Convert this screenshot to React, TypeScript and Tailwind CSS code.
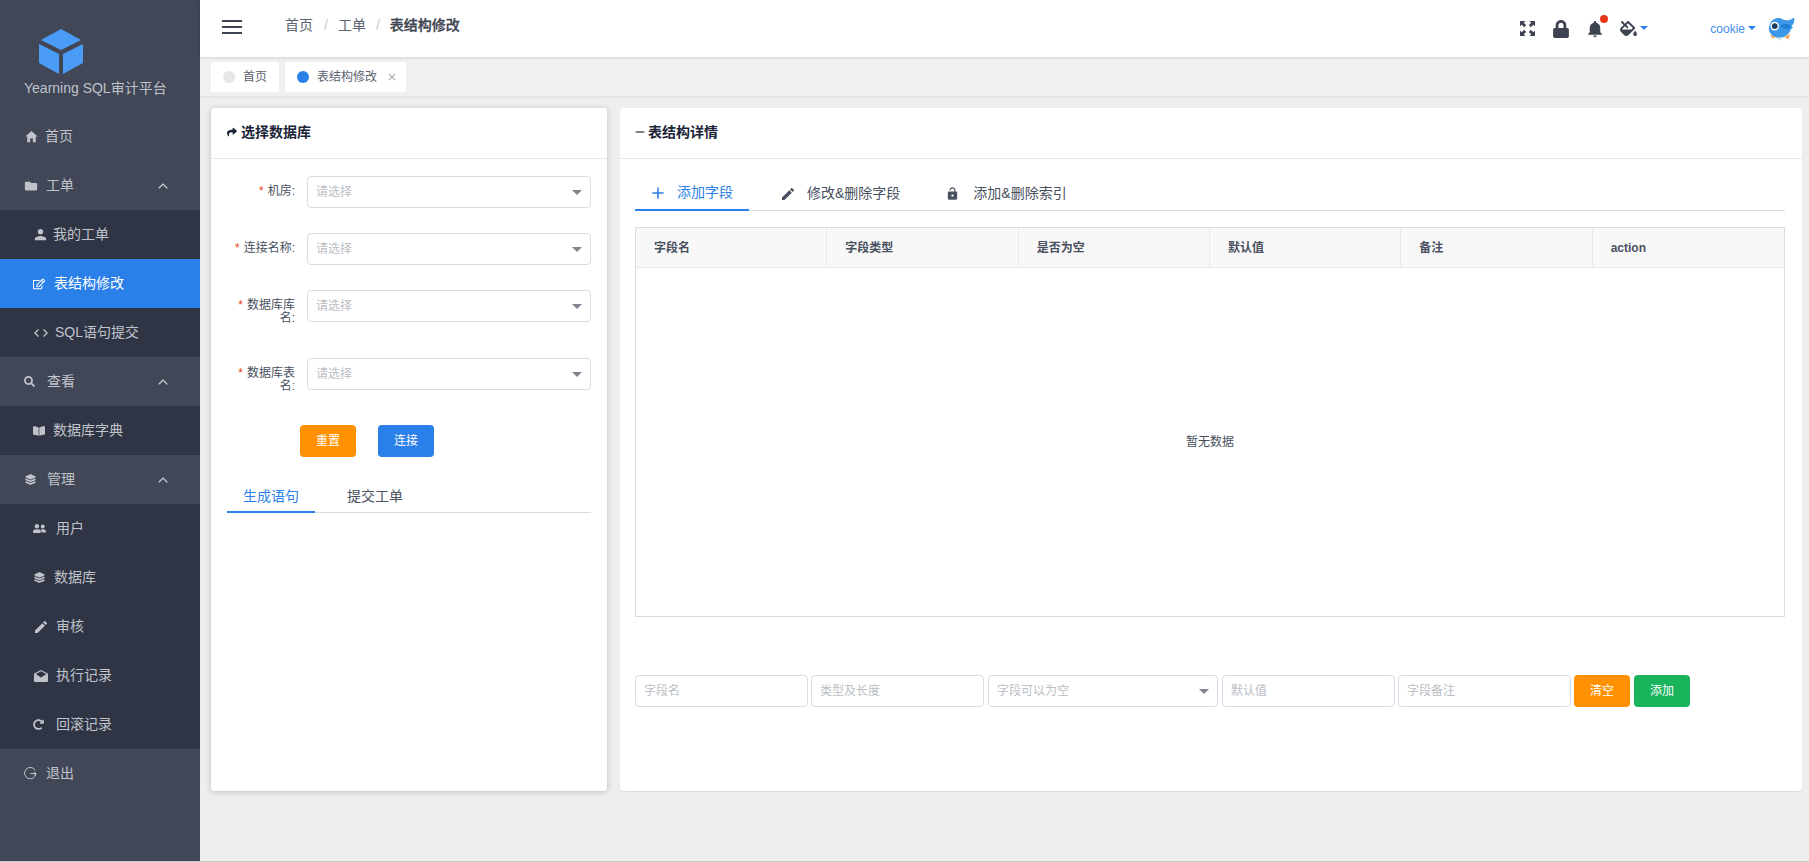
import {ReactNode} from "react";
import {
  IoMdAdd,
  IoMdClose,
  IoMdCode,
  IoMdCreate,
  IoMdFolder,
  IoMdHome,
  IoMdMailOpen,
  IoMdNotifications,
  IoMdPerson,
  IoMdRemove,
  IoMdUnlock,
  IoIosArrowUp,
} from "react-icons/io";
import {FaBookOpen, FaFillDrip, FaLock, FaRedoAlt, FaRegEdit, FaSearch, FaShare, FaUserFriends} from "react-icons/fa";
import {IoLayers} from "react-icons/io5";

const font = "font-['Liberation_Sans','Noto_Sans_CJK_SC',sans-serif]";

function Logo() {
  return (
    <svg width="44" height="46" viewBox="0 0 44 46" className="block">
      <path d="M22 0 42 11 22 21 2 11Z" fill="#4a9cf6" />
      <path d="M0 15 20 25V45L0 34Z" fill="#4a9cf6" />
      <path d="M44 15 24 25V45L44 34Z" fill="#4a9cf6" />
    </svg>
  );
}

function Bird() {
  return (
    <svg width="29" height="28" viewBox="0 0 30 28" className="block">
      <path d="M3 9C5 3 12 1 16 4 20 6 24 5 28 2 29 7 27 10 25 11 27 12 27 13 25 14 23 20 17 24 10 23 4 22 0 15 3 9Z" fill="#3b97e8" />
      <path d="M9 23 13 26 17 23Z" fill="#d9e6ee" />
      <path d="M18 22 22 25 24 19Z" fill="#f2a65a" />
      <path d="M3 20 6 24 9 22Z" fill="#f2a65a" />
      <circle cx="8" cy="11" r="4.5" fill="#ffffff" />
      <circle cx="8" cy="11" r="3" fill="#1d3a5f" />
      <path d="M14 10C18 8 23 9 25 11 23 15 18 16 14 10Z" fill="#1f7fd4" />
    </svg>
  );
}

function LogoutIcon() {
  return (
    <svg width="13" height="13" viewBox="0 0 13 13" fill="none" stroke="currentColor" strokeWidth="1" className="block">
      <path d="M11.2 3.2A5.7 5.7 0 1 0 12 6.5" />
      <path d="M6.5 6.5H12M10 4.8 12 6.5 10 8.2" />
    </svg>
  );
}

function ExpandIcon() {
  return (
    <svg width="15" height="15" viewBox="0 0 15 15" fill="#3d4350" className="block">
      <path d="M0 0H5.5L3.8 1.7 6.2 4.1 4.1 6.2 1.7 3.8 0 5.5Z" />
      <path d="M15 0V5.5L13.3 3.8 10.9 6.2 8.8 4.1 11.2 1.7 9.5 0Z" />
      <path d="M0 15V9.5L1.7 11.2 4.1 8.8 6.2 10.9 3.8 13.3 5.5 15Z" />
      <path d="M15 15H9.5L11.2 13.3 8.8 10.9 10.9 8.8 13.3 11.2 15 9.5Z" />
    </svg>
  );
}

type NavItem = {
  label: string;
  icon: ReactNode;
  sub?: boolean;
  active?: boolean;
  arrow?: boolean;
  iconBox: string;
};

const navItems: NavItem[] = [
  {label: "首页", icon: <IoMdHome size={15} />, iconBox: "w-[21px]"},
  {label: "工单", icon: <IoMdFolder size={14} />, arrow: true, iconBox: "w-[22px]"},
  {label: "我的工单", icon: <IoMdPerson size={15} />, sub: true, iconBox: "w-[20px]"},
  {label: "表结构修改", icon: <FaRegEdit size={12} />, sub: true, active: true, iconBox: "w-[21px]"},
  {label: "SQL语句提交", icon: <IoMdCode size={16} />, sub: true, iconBox: "w-[22px]"},
  {label: "查看", icon: <FaSearch size={11} />, arrow: true, iconBox: "w-[23px]"},
  {label: "数据库字典", icon: <FaBookOpen size={12} />, sub: true, iconBox: "w-[20px]"},
  {label: "管理", icon: <IoLayers size={13} />, arrow: true, iconBox: "w-[23px]"},
  {label: "用户", icon: <FaUserFriends size={13} />, sub: true, iconBox: "w-[23px]"},
  {label: "数据库", icon: <IoLayers size={13} />, sub: true, iconBox: "w-[21px]"},
  {label: "审核", icon: <IoMdCreate size={16} />, sub: true, iconBox: "w-[23px]"},
  {label: "执行记录", icon: <IoMdMailOpen size={16} />, sub: true, iconBox: "w-[23px]"},
  {label: "回滚记录", icon: <FaRedoAlt size={11} />, sub: true, iconBox: "w-[23px]"},
  {label: "退出", icon: <LogoutIcon />, iconBox: "w-[22px]"},
];

function Sidebar() {
  return (
    <aside className="w-[200px] shrink-0 bg-[#414757] text-[14px] text-[#c0c3ca]">
      <div className="flex h-[112px] flex-col pl-[24px]">
        <div className="ml-[15px] mt-[29px]">
          <Logo />
        </div>
        <div className="mt-[3px] text-[14px] leading-[20px] whitespace-nowrap text-[#bfc2c9]">Yearning SQL审计平台</div>
      </div>
      {navItems.map((item) => (
        <div
          key={item.label}
          className={`flex h-[49px] items-center ${item.sub ? "pl-[33px]" : "pl-[24px]"} ${
            item.active ? "bg-[#2a7fe8] text-white" : item.sub ? "bg-[#2f3545]" : ""
          }`}
        >
          <span className={`flex shrink-0 items-center ${item.iconBox}`}>{item.icon}</span>
          <span className="flex-1">{item.label}</span>
          {item.arrow && <IoIosArrowUp size={14} className="mr-[30px]" />}
        </div>
      ))}
    </aside>
  );
}

function Header() {
  return (
    <header className="relative z-10 flex h-[57px] items-center bg-white pl-[22px] pr-[13px] shadow-[0_1px_3px_rgba(0,0,0,0.12)]">
      <div className="flex w-[20px] -translate-y-[2px] flex-col gap-[4px]">
        <div className="h-[2px] bg-[#3d4350]" />
        <div className="h-[2px] bg-[#3d4350]" />
        <div className="h-[2px] bg-[#3d4350]" />
      </div>
      <nav className="ml-[43px] flex -translate-y-[3px] items-center text-[14px] text-[#5b6270]">
        <span>首页</span>
        <span className="ml-[11px] mr-[10px] text-[#ccc]">/</span>
        <span>工单</span>
        <span className="mx-[10px] text-[#ccc]">/</span>
        <span className="font-medium text-[#3d4350] [-webkit-text-stroke:0.3px_#3d4350]">表结构修改</span>
      </nav>
      <div className="ml-auto flex items-center text-[#3d4350]">
        <ExpandIcon />
        <FaLock size={18} className="ml-[17px]" />
        <span className="relative ml-[15px]">
          <IoMdNotifications size={20} />
          <span className="absolute -right-[3px] -top-[4px] h-[8px] w-[8px] rounded-full bg-[#e8361c]" />
        </span>
        <FaFillDrip size={17} className="ml-[15px]" />
        <span className="ml-[3px] h-0 w-0 -translate-y-[1px] border-x-[4px] border-t-[4px] border-x-transparent border-t-[#2a7fe8]" />
        <span className="ml-[62px] text-[12px] text-[#3f8fe8]">cookie</span>
        <span className="ml-[3px] h-0 w-0 -translate-y-[1px] border-x-[4px] border-t-[4px] border-x-transparent border-t-[#2a7fe8]" />
        <span className="ml-[11px]">
          <Bird />
        </span>
      </div>
    </header>
  );
}

function TabsBar() {
  return (
    <div className="flex h-[41px] gap-[6px] border-b-2 border-[#e4e4e4] bg-[#f0f0f0] pl-[11px] pt-[5px]">
      <div className="flex h-[30px] w-[68px] items-center rounded-[2px] bg-white pl-[12px] text-[12px] text-[#5b6270]">
        <span className="mr-[8px] h-[12px] w-[12px] rounded-full bg-[#e6e6e6]" />
        首页
      </div>
      <div className="flex h-[30px] w-[121px] items-center rounded-[2px] bg-white pl-[12px] text-[12px] text-[#5b6270]">
        <span className="mr-[8px] h-[12px] w-[12px] rounded-full bg-[#2a7fe8]" />
        表结构修改
        <IoMdClose size={12} className="ml-[9px] text-[#a0a4ac]" />
      </div>
    </div>
  );
}

function Caret() {
  return <span className="h-0 w-0 border-x-[5px] border-t-[5px] border-x-transparent border-t-[#80848f]" />;
}

function SelectBox({text, className}: {text: string; className: string}) {
  return (
    <div className={`flex h-[32px] items-center justify-between rounded-[4px] border border-[#d7dde4] bg-white pl-[8px] pr-[8px] text-[12px] text-[#bbbec4] ${className}`}>
      {text}
      <Caret />
    </div>
  );
}

function FormRow({label, rowClass}: {label: ReactNode; rowClass: string}) {
  return (
    <div className={`flex ${rowClass}`}>
      <div className="w-[96px] shrink-0 pl-[22px] pr-[12px] pt-[9px] text-right text-[12px] leading-[13px] text-[#495060]">
        <span className="mr-[4px] text-[#ed3f14]">*</span>
        {label}
      </div>
      <SelectBox text="请选择" className="flex-1" />
    </div>
  );
}

function LeftCard() {
  return (
    <section className="flex w-[396px] shrink-0 flex-col rounded-[4px] bg-white shadow-[0_1px_6px_rgba(0,0,0,0.2)]">
      <div className="flex h-[51px] items-center gap-[4px] border-b border-[#e9eaec] pb-[2px] pl-[16px] text-[14px] font-bold text-[#1c2438]">
        <FaShare size={10} />
        选择数据库
      </div>
      <div className="px-[16px] pt-[17px]">
        <FormRow label="机房:" rowClass="mb-[25px] -ml-[16px]" />
        <FormRow label="连接名称:" rowClass="mb-[25px] -ml-[16px]" />
        <FormRow label="数据库库名:" rowClass="mb-[24px] h-[44px] -ml-[16px]" />
        <FormRow label="数据库表名:" rowClass="h-[44px] -ml-[16px]" />
        <div className="mt-[23px] flex gap-[22px] pl-[73px]">
          <button className="h-[32px] w-[56px] rounded-[4px] bg-[#ff9000] text-[12px] text-white">重置</button>
          <button className="h-[32px] w-[56px] rounded-[4px] bg-[#2a7fe8] text-[12px] text-white">连接</button>
        </div>
        <div className="mt-[24px] flex h-[32px] border-b border-[#d7dde4] text-[14px] text-[#495060]">
          <div className="h-[32px] border-b-2 border-[#2a7fe8] px-[16px] pt-[5px] text-[#2a7fe8]">生成语句</div>
          <div className="ml-[16px] px-[16px] pt-[5px]">提交工单</div>
        </div>
      </div>
    </section>
  );
}

const tableColumns = ["字段名", "字段类型", "是否为空", "默认值", "备注", "action"];

function RightCard() {
  return (
    <section className="flex flex-1 flex-col rounded-[4px] bg-white shadow-[0_1px_1px_rgba(0,0,0,0.08)]">
      <div className="flex h-[51px] items-center gap-[1px] border-b border-[#e9eaec] pb-[2px] pl-[13px] text-[14px] font-bold text-[#1c2438]">
        <IoMdRemove size={14} />
        表结构详情
      </div>
      <div className="pl-[15px] pr-[17px] pt-[17px]">
        <div className="flex h-[35px] border-b border-[#d7dde4] text-[14px] text-[#495060]">
          <div className="flex h-[35px] items-center gap-[10px] border-b-2 border-[#2a7fe8] pl-[14px] pr-[16px] text-[#2a7fe8]">
            <IoMdAdd size={18} />
            添加字段
          </div>
          <div className="ml-[16px] flex h-[35px] items-center gap-[11px] pl-[15px] pr-[15px]">
            <IoMdCreate size={16} />
            修改&删除字段
          </div>
          <div className="ml-[16px] flex h-[35px] items-center gap-[13px] pl-[14px] pr-[15px]">
            <IoMdUnlock size={15} />
            添加&删除索引
          </div>
        </div>
        <div className="mt-[16px] flex h-[390px] flex-col border border-[#d7dde4] text-[12px]">
          <div className="grid h-[40px] grid-cols-6 border-b border-[#e9eaec] bg-[#f8f8f9] font-bold text-[#495060]">
            {tableColumns.map((col) => (
              <div key={col} className="flex items-center border-r border-[#e9eaec] pl-[18px] last:border-r-0">
                {col}
              </div>
            ))}
          </div>
          <div className="flex flex-1 items-center justify-center text-[#495060]">暂无数据</div>
        </div>
        <div className="mt-[58px] flex items-center text-[12px]">
          <input placeholder="字段名" className="h-[32px] w-[173px] rounded-[4px] border border-[#d7dde4] px-[8px] outline-none placeholder:text-[#bbbec4]" />
          <input placeholder="类型及长度" className="ml-[3px] h-[32px] w-[173px] rounded-[4px] border border-[#d7dde4] px-[8px] outline-none placeholder:text-[#bbbec4]" />
          <SelectBox text="字段可以为空" className="ml-[4px] w-[230px]" />
          <input placeholder="默认值" className="ml-[4px] h-[32px] w-[173px] rounded-[4px] border border-[#d7dde4] px-[8px] outline-none placeholder:text-[#bbbec4]" />
          <input placeholder="字段备注" className="ml-[3px] h-[32px] w-[173px] rounded-[4px] border border-[#d7dde4] px-[8px] outline-none placeholder:text-[#bbbec4]" />
          <button className="ml-[3px] h-[32px] w-[56px] rounded-[4px] bg-[#ff9000] text-white">清空</button>
          <button className="ml-[4px] h-[32px] w-[56px] rounded-[4px] bg-[#19b35c] text-white">添加</button>
        </div>
      </div>
    </section>
  );
}

export default function App() {
  return (
    <div className={`flex h-[862px] flex-col overflow-hidden bg-[#c9c9c9] ${font}`}>
      <div className="flex h-[861px]">
        <Sidebar />
        <div className="flex min-w-0 flex-1 flex-col bg-[#eeeeee]">
          <Header />
          <TabsBar />
          <main className="flex h-[693px] gap-[13px] pl-[11px] pr-[7px] pt-[10px]">
            <LeftCard />
            <RightCard />
          </main>
        </div>
      </div>
    </div>
  );
}
